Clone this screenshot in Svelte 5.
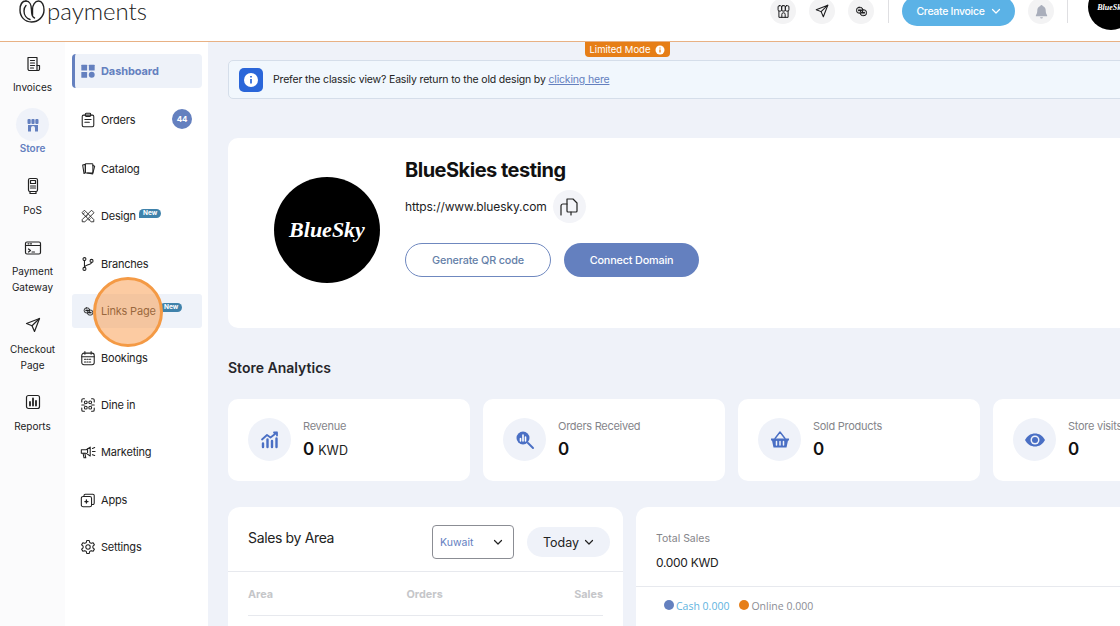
<script>
  const icons = {
    invoice: '<path d="M4 2.500h9v13H5.500A1.500 1.500 0 0 1 4 14z"/><path d="M13 10.500h2.500V14a1.500 1.500 0 0 1-1.500 1.500h-1M6.500 5.500h4M6.500 8h4M6.500 10.500h4M6.500 13h3"/>',
    store: '<g fill="currentColor" stroke="none"><rect x="3.500" y="3" width="3.200" height="5" rx="1"/><rect x="7.400" y="3" width="3.200" height="5" rx="1"/><rect x="11.300" y="3" width="3.200" height="5" rx="1"/><path d="M4 9h10v6.500h-3v-3.500a2 2 0 0 0-4 0v3.500H4z"/></g>',
    storeo: '<rect x="2.500" y="2" width="4.300" height="6.500" rx="1.500"/><rect x="6.800" y="2" width="4.400" height="6.500" rx="1.500"/><rect x="11.200" y="2" width="4.300" height="6.500" rx="1.500"/><path d="M3.500 8.500V16h11V8.500M7 16v-3.500a2 2 0 0 1 4 0V16"/>',
    pos: '<rect x="4.500" y="1.500" width="9" height="13" rx="1.500"/><rect x="6.500" y="3.500" width="5" height="3"/><path d="M6.500 9h5M6.500 11h5"/><path d="M6 14.500v2h6v-2"/>',
    gateway: '<rect x="1.500" y="3" width="15" height="12" rx="1.500"/><path d="M1.500 6.500h15M4.500 10l2 1.500-2 1.500M8 13h2.500M4 4.800h1M6.500 4.800h1"/>',
    send: '<path d="M15.500 2.500 2.500 7.500l5.500 2.200 2.500 5.800z"/><path d="M15.500 2.500 8 9.700"/>',
    reports: '<rect x="2.500" y="2.500" width="13" height="13" rx="2"/><path stroke-width="1.800" d="M6 12.500V9M9 12.500v-7M12 12.500V8"/>',
    dashboard: '<g fill="currentColor" stroke="none"><rect x="1.500" y="2" width="6.500" height="6.500" rx=".6"/><rect x="10" y="2" width="6.500" height="6.500" rx=".6"/><rect x="1.500" y="10" width="6.500" height="6.500" rx=".6"/><circle cx="13.200" cy="13.200" r="3.300"/></g>',
    orders: '<rect x="2.500" y="3.500" width="13" height="13" rx="1.500"/><rect x="6" y="1.500" width="6" height="3.500" rx="1"/><path d="M5.500 8.500h7M5.500 11.500h5"/>',
    catalog: '<path d="M3 4.500 6 3.800v9.500L4.500 14z"/><rect x="6" y="3" width="8.500" height="10.500" rx="1"/><path d="M14.500 5l2 .8-2.200 8.700-5.800-1"/>',
    design: '<path stroke-width="1" d="M2.500 5 5 2.500l10.500 10.500v2.500H13zM15.500 5 13 2.500 2.500 13v2.500H5zM3.500 7l1.500-1.500M6.500 10l1.500-1.500M10 13.500l1.500-1.500"/>',
    branches: '<circle cx="5" cy="3.500" r="1.700"/><circle cx="13" cy="5.500" r="1.700"/><circle cx="5" cy="14.500" r="1.700"/><path d="M5 5.200v7.600M13 7.200c0 3-8 2.500-8 5.600"/>',
    links: '<rect x="3" y="4" width="7.500" height="7" rx="3" fill="currentColor" fill-opacity=".15"/><rect x="7.500" y="7" width="7.500" height="7" rx="3" fill="currentColor" fill-opacity=".15"/><path d="M5.500 7.500h3M9.500 10.500h3" stroke-width="1.600"/>',
    bookings: '<rect x="2" y="3.500" width="14" height="13" rx="2.500"/><path d="M2 7.500h14M5.500 1.800v3M12.500 1.800v3"/><path stroke-dasharray="1.400 1.400" d="M5 10.500h8M5 13.500h8"/>',
    dine: '<path d="M2 5.500V3.500A1.500 1.500 0 0 1 3.500 2H5M13 2h1.500A1.500 1.500 0 0 1 16 3.500v2M16 12.500v2a1.500 1.500 0 0 1-1.500 1.500H13M5 16H3.500A1.500 1.500 0 0 1 2 14.500v-2"/><circle cx="6.500" cy="6" r="1.600"/><circle cx="11.500" cy="6" r="1.600"/><circle cx="6.500" cy="12" r="1.600"/><circle cx="11.500" cy="12" r="1.600"/><path d="M2 9h3M13 9h3"/>',
    marketing: '<path d="M1.500 6.500h5.500l4.500-3v10L7 10.500H1.500z"/><path d="m3.500 10.500 1 5h2l-1-5M14 5l2.500-1M14 8.500h3M14 12l2.500 1M8.500 5.500v4"/>',
    apps: '<rect x="1.500" y="5" width="11.500" height="11.500" rx="2"/><path d="M4.500 5V4a1.500 1.500 0 0 1 1.500-1.500h8.500A1.500 1.500 0 0 1 16 4v8.500a1.500 1.500 0 0 1-1.500 1.500H13"/><path d="M7.200 9v3.500M5.500 10.800h3.500" stroke-width="1.500"/>',
    settings: '<circle cx="9" cy="9" r="2.500"/><path d="m7.600 1.700 2.800 0 .5 2.200 1.700 1 2.200-.7 1.400 2.400-1.700 1.500v1.800l1.700 1.500-1.400 2.400-2.200-.7-1.700 1-.5 2.200H7.600l-.5-2.200-1.700-1-2.200.7-1.400-2.400 1.700-1.500V8.100L1.800 6.600l1.400-2.400 2.200.7 1.700-1z"/>',
    chart: '<path d="M2 9.500 7 5l3.500 2.500L17 2.500M14 2.500h3v3" stroke-width="1.800"/><path stroke-width="2.400" d="M3 17v-3.500M7.500 17V9.500M12 17v-6M16.500 17V8.500"/>',
    search: '<circle cx="8" cy="8" r="6.500" fill="currentColor" stroke="none"/><path stroke="#fff" stroke-width="1.600" d="M5.500 11V8.500M8 11V5M10.500 11V7"/><path stroke-width="2" d="m13 13 5 5"/>',
    basket: '<path fill="currentColor" stroke="none" d="M1 8.500h18v2h-1l-1.500 7h-13L2 10.500H1z"/><path stroke-width="1.400" d="m5 8.500 5-6.500 5 6.500"/><path stroke="#eff2f9" stroke-width="1.500" d="M6.500 11.500v3.500M10 11.500v3.500M13.500 11.500v3.500"/>',
    eye: '<path fill="currentColor" stroke="none" d="M0 10c2.500-4.500 6-6.500 10-6.500s7.500 2 10 6.500c-2.500 4.500-6 6.500-10 6.500S2.500 14.500 0 10z"/><circle cx="10" cy="10" r="4.500" fill="#eff2f9" stroke="none"/><circle cx="10" cy="10" r="3" fill="currentColor" stroke="none"/>'
  };

  const rail = [
    { id: 'invoice', label: ['Invoices'] },
    { id: 'store', label: ['Store'], active: true },
    { id: 'pos', label: ['PoS'] },
    { id: 'gateway', label: ['Payment', 'Gateway'] },
    { id: 'send', label: ['Checkout', 'Page'] },
    { id: 'reports', label: ['Reports'] }
  ];

  const nav = [
    { id: 'dashboard', label: 'Dashboard', active: true },
    { id: 'orders', label: 'Orders', count: 44 },
    { id: 'catalog', label: 'Catalog' },
    { id: 'design', label: 'Design', isNew: true },
    { id: 'branches', label: 'Branches' },
    { id: 'links', label: 'Links Page', isNew: true, hover: true },
    { id: 'bookings', label: 'Bookings' },
    { id: 'dine', label: 'Dine in' },
    { id: 'marketing', label: 'Marketing' },
    { id: 'apps', label: 'Apps' },
    { id: 'settings', label: 'Settings' }
  ];

  const stats = [
    { id: 'chart', label: 'Revenue', value: '0', unit: 'KWD' },
    { id: 'search', label: 'Orders Received', value: '0' },
    { id: 'basket', label: 'Sold Products', value: '0' },
    { id: 'eye', label: 'Store visits', value: '0' }
  ];
</script>

{#snippet icon(id, size = 18, box = 18)}
  <svg class="ic" width={size} height={size} viewBox="0 0 {box} {box}" fill="none" stroke="currentColor" stroke-width="1.200" stroke-linecap="round" stroke-linejoin="round">{@html icons[id]}</svg>
{/snippet}

{#snippet chevron(size = 10)}
  <svg width={size} height={size} viewBox="0 0 10 10" fill="none" stroke="currentColor" stroke-width="1.200" stroke-linecap="round" stroke-linejoin="round"><path d="m1.500 3.500 3.500 3.500 3.500-3.500"/></svg>
{/snippet}

<div class="page">
  <header class="top">
    <div class="logo">
      <svg width="26" height="23" viewBox="0 0 26 23" fill="none" stroke="#222" stroke-width="1.400" stroke-linecap="round"><path d="M7 1C3 1 1 5 1 10c0 7 5 12 11.500 12S25 17 25 10C25 5 23 1 19.500 1 16 1 13.500 5 13.500 9.500V15"/><path d="M7 1c3.500 0 5.500 4 5.500 9 0 4 .6 7 3 8M7 5.500C5.500 7 5 9 5 11c0 4 2.500 7.500 6 8.500"/></svg>
      <span class="brand">payments</span>
    </div>
    <div class="tools">
      <span class="tool">{@render icon('storeo', 15)}</span>
      <span class="tool">{@render icon('send', 16)}</span>
      <span class="tool">{@render icon('links', 15)}</span>
      <span class="sep first"></span>
      <span class="create">Create Invoice {@render chevron(10)}</span>
      <span class="tool bell">
        <svg width="15" height="15" viewBox="0 0 16 16" fill="#a9aebb"><path d="M8 1a1.200 1.200 0 0 0-1.200 1.200C4.500 2.800 3.500 4.800 3.500 7c0 2.500-.6 3.800-1.500 5v1h12v-1c-.9-1.200-1.500-2.500-1.500-5 0-2.200-1-4.200-3.300-4.800A1.200 1.200 0 0 0 8 1zM6.500 14a1.500 1.500 0 0 0 3 0z"/></svg>
      </span>
      <span class="sep"></span>
      <span class="avatar-sm">BlueSky</span>
    </div>
  </header>

  <div class="body">
    <aside class="rail">
      {#each rail as r}
        <div class="rail-item" class:active={r.active}>
          <span class="rail-ic">{@render icon(r.id, 18)}</span>
          <span class="rail-label">{#each r.label as l}<span>{l}</span>{/each}</span>
        </div>
      {/each}
    </aside>

    <nav class="nav">
      {#each nav as n}
        <div class="nav-item" class:active={n.active} class:hover={n.hover}>
          <span class="nav-ic">{@render icon(n.id, n.id === 'links' ? 13 : 16)}</span>
          <span class="nav-label">{n.label}</span>
          {#if n.isNew}<span class="new">New</span>{/if}
          {#if n.count}<span class="count">{n.count}</span>{/if}
        </div>
      {/each}
      <span class="spot"></span>
    </nav>

    <main class="main">
      <span class="limited">Limited Mode
        <svg width="10" height="10" viewBox="0 0 10 10"><circle cx="5" cy="5" r="4.500" fill="#fff"/><path d="M5 4.500v3M5 2.500v1" stroke="#e67e17" stroke-width="1.300"/></svg>
      </span>
      <div class="inner">
        <div class="alert">
          <span class="alert-ic">
            <svg width="16" height="16" viewBox="0 0 16 16"><circle cx="8" cy="8" r="7" fill="#fff"/><path d="M8 7v4.500M8 4v1.500" stroke="#2a66d9" stroke-width="1.700"/></svg>
          </span>
          <span>Prefer the classic view? Easily return to the old design by <a href="#top">clicking here</a></span>
        </div>

        <section class="store">
          <div class="avatar"><span>BlueSky</span></div>
          <div class="store-info">
            <h1>BlueSkies testing</h1>
            <div class="url">
              <span>https://www.bluesky.com</span>
              <span class="copy">
                <svg width="20" height="20" viewBox="0 0 20 20" fill="none" stroke="#222" stroke-width="1.200" stroke-linecap="round" stroke-linejoin="round"><path d="M8 2h6l4 4v8a1 1 0 0 1-1 1H9a1 1 0 0 1-1-1z"/><path d="M2 18V9a2 2 0 0 1 2-2h4M12 15v3"/></svg>
              </span>
            </div>
            <div class="actions">
              <span class="btn ghost">Generate QR code</span>
              <span class="btn solid">Connect Domain</span>
            </div>
          </div>
        </section>

        <h2>Store Analytics</h2>

        <div class="stats">
          {#each stats as s}
            <div class="stat">
              <span class="stat-ic">{@render icon(s.id, 20, 20)}</span>
              <div>
                <div class="stat-label">{s.label}</div>
                <div class="stat-value">{s.value}{#if s.unit}<small>{s.unit}</small>{/if}</div>
              </div>
            </div>
          {/each}
        </div>

        <div class="lower">
          <section class="area">
            <div class="area-head">
              <h3>Sales by Area</h3>
              <span class="select">Kuwait {@render chevron(10)}</span>
              <span class="pill">Today {@render chevron(10)}</span>
            </div>
            <div class="cols"><span>Area</span><span>Orders</span><span>Sales</span></div>
          </section>
          <section class="total">
            <div class="total-head">
              <div class="total-label">Total Sales</div>
              <div class="total-value">0.000 KWD</div>
            </div>
            <div class="legend">
              <i class="dot blue"></i><span class="cash">Cash 0.000</span>
              <i class="dot orange"></i><span>Online 0.000</span>
            </div>
          </section>
        </div>
      </div>
    </main>
  </div>
</div>

<style>
  :global(body) { margin: 0; overflow: hidden; }
  .page { width: 1120px; height: 626px; overflow: hidden; display: flex; flex-direction: column; font-family: Inter, "Liberation Sans", sans-serif; color: #1c1c1e; background: #fff; }
  .ic { display: block; flex: none; }

  .top { height: 42px; flex: none; box-sizing: border-box; border-bottom: 1px solid #e8b184; display: flex; justify-content: space-between; align-items: flex-start; }
  .logo { display: flex; align-items: flex-start; margin: 0 0 0 19px; gap: 2px; height: 24px; }
  .brand { font-family: Lato, sans-serif; font-weight: 300; font-size: 24px; line-height: 24px; color: #222; margin-top: -1px; }
  .tools { display: flex; align-items: center; height: 22px; margin-right: -14px; }
  .tool { width: 26px; height: 26px; border-radius: 50%; background: #f3f3f4; display: grid; place-items: center; margin-right: 13px; flex: none; }
  .sep { width: 1px; height: 24px; background: #dfdfe2; flex: none; margin: 0 20px 0 0; }
  .sep.first { margin: 0 13px 0 1px; }
  .create { width: 113px; height: 30px; margin-right: 13px; box-sizing: border-box; border-radius: 15px; background: #5bb2e6; color: #fff; font-size: 10.500px; letter-spacing: -.3px; font-weight: 500; display: flex; align-items: center; justify-content: center; gap: 6px; flex: none; }
  .bell { margin-right: 13px; }
  .avatar-sm { width: 46px; height: 46px; border-radius: 50%; background: #000; color: #fff; flex: none; margin-top: -8px; display: grid; place-items: center; font: italic 700 8px "Liberation Serif", serif; }

  .body { flex: 1; display: flex; min-height: 0; }

  .rail { width: 65px; flex: none; background: #fbfbfc; font-size: 10px; text-align: center; box-sizing: border-box; padding-top: 5px; }
  .rail-item { display: flex; flex-direction: column; align-items: center; margin-bottom: 13.400px; }
  .rail-ic { width: 33px; height: 33px; display: grid; place-items: center; color: #222; }
  .rail-label { display: flex; flex-direction: column; line-height: 16px; margin-top: -1px; }
  .rail-item.active .rail-ic { background: #eff2f9; border-radius: 50%; color: #6480bf; }
  .rail-item.active .rail-label { color: #6480bf; font-weight: 600; }

  .nav { width: 143px; flex: none; position: relative; box-sizing: border-box; padding: 12px 6px 0 7px; display: flex; flex-direction: column; gap: 13.300px; background: #fff; }
  .nav-item { height: 34px; flex: none; display: flex; align-items: center; padding-left: 8px; gap: 5px; border-radius: 3px; font-size: 11px; letter-spacing: -.2px; color: #222; position: relative; }
  .nav-ic { width: 16px; display: grid; place-items: center; flex: none; }
  .nav-item:nth-child(2) { margin-top: 2px; }
  .nav-item:nth-child(3) { margin-top: 1px; }
  .nav-item:nth-child(5) { margin-top: 1px; }
  .nav-item:nth-child(7) { margin-top: -1px; }
  .nav-item.active { background: #eef2f9; border-left: 3px solid #6480bf; padding-left: 5px; border-radius: 4px; color: #6480bf; font-weight: 700; letter-spacing: -.1px; }
  .nav-item.hover { background: #eef2f9; }
  .new { position: absolute; font-size: 6.500px; letter-spacing: 0; font-weight: 700; color: #fff; background: #3f82ab; border-radius: 6px 6px 6px 0; padding: 1px 4px; line-height: 7px; top: 10px; left: 67px; }
  .nav-item.hover .new { left: 88px; top: 9px; }
  .count { position: absolute; right: 10px; top: 6px; width: 20px; height: 20px; border-radius: 50%; background: #6480bf; color: #fff; font-size: 8px; font-weight: 700; display: grid; place-items: center; }
  .spot { position: absolute; left: 28px; top: 235px; width: 70px; height: 70px; box-sizing: border-box; border-radius: 50%; border: 3px solid #f49a45; background: rgba(249, 160, 85, .55); }

  .main { flex: 1; min-width: 0; position: relative; background: #eff2f9; overflow: hidden; padding: 18px 0 0 20px; }
  .limited { position: absolute; left: 377px; top: 0; width: 85px; height: 15px; box-sizing: border-box; border-radius: 0 0 4px 4px; background: #e67e17; color: #fff; font-size: 9.500px; display: flex; align-items: center; justify-content: center; gap: 5px; }
  .inner { width: 1020px; }

  .alert { height: 39px; box-sizing: border-box; background: #f1f7fd; border: 1px solid #d5deea; border-radius: 5px; display: flex; align-items: center; gap: 10px; padding-left: 10px; font-size: 10.500px; letter-spacing: -.17px; color: #222; margin-bottom: 39px; }
  .alert-ic { width: 24px; height: 24px; border-radius: 5px; background: #2a66d9; display: grid; place-items: center; }
  .alert a { color: #6480bf; }

  .store { height: 190px; box-sizing: border-box; background: #fff; border-radius: 10px; padding: 20px 46px 0; display: flex; gap: 25px; margin-bottom: 28px; }
  .avatar { width: 106px; height: 106px; border-radius: 50%; background: #000; color: #fff; display: grid; place-items: center; margin-top: 19px; flex: none; font: italic 700 22px "Liberation Serif", serif; }
  h1 { font-size: 20px; line-height: 24px; font-weight: 700; margin: 0 0 8px; color: #111; letter-spacing: -.5px; }
  .url { display: flex; align-items: center; gap: 6px; font-size: 12px; letter-spacing: -.1px; height: 33px; margin-bottom: 20px; }
  .copy { width: 33px; height: 33px; border-radius: 50%; background: #f3f4f8; display: grid; place-items: center; }
  .actions { display: flex; gap: 13px; }
  .btn { height: 34px; box-sizing: border-box; border-radius: 17px; display: grid; place-items: center; font-size: 10.800px; letter-spacing: -.15px; font-weight: 500; }
  .ghost { width: 146px; border: 1px solid #6f88bf; color: #6480a8; }
  .solid { width: 135px; background: #6480bf; color: #fff; }

  h2 { font-size: 14px; line-height: 24px; font-weight: 600; margin: 0 0 19px; color: #26262a; }

  .stats { display: flex; gap: 13px; margin-bottom: 26px; }
  .stat { width: 242px; height: 82px; flex: none; box-sizing: border-box; background: #fff; border-radius: 10px; padding: 19px 20px; display: flex; gap: 12px; }
  .stat-ic { width: 43px; height: 43px; border-radius: 50%; background: #eff2f9; color: #4a6fc4; display: grid; place-items: center; flex: none; }
  .stat-label { font-size: 11px; letter-spacing: -.27px; line-height: 16px; color: #85858a; }
  .stat-value { font-size: 17px; line-height: 28px; font-weight: 600; color: #111; margin-top: 1px; }
  .stat-value small { font-size: 12.500px; font-weight: 400; margin-left: 4px; color: #222; }

  .lower { display: flex; gap: 13px; align-items: flex-start; }
  .area { width: 395px; flex: none; background: #fff; border-radius: 12px 12px 0 0; height: 130px; }
  .area-head { height: 65px; box-sizing: border-box; border-bottom: 1px solid #e7e9ee; display: flex; align-items: flex-start; padding: 18px 13px 0 20px; }
  h3 { font-size: 14px; font-weight: 400; line-height: 26px; letter-spacing: -.35px; margin: 0 auto -1px 0; color: #222; }
  .select { width: 82px; height: 34px; box-sizing: border-box; border: 1px solid #8b8d94; border-radius: 4px; display: flex; align-items: center; justify-content: space-between; padding: 0 10px 0 7px; font-size: 10.500px; color: #6480bf; margin-right: 13px; }
  .select svg { color: #222; }
  .pill { width: 83px; height: 30px; margin-top: 2px; border-radius: 15px; background: #eff2f9; display: flex; align-items: center; justify-content: center; gap: 5px; font-size: 12.500px; color: #222; }
  .cols { display: flex; justify-content: space-between; margin: 0 20px; height: 44px; line-height: 45px; box-sizing: border-box; border-bottom: 1px solid #e7e9ee; font-size: 10.800px; font-weight: 700; color: #c5c6c9; }
  .cols span:nth-child(2) { margin-left: 2px; }

  .total { flex: 1; background: #fff; border-radius: 12px 12px 0 0; height: 130px; }
  .total-head { height: 80px; box-sizing: border-box; border-bottom: 1px solid #e7e9ee; padding: 24px 20px 0; }
  .total-label { font-size: 10.500px; line-height: 16px; color: #85858a; }
  .total-value { font-size: 12px; line-height: 16px; margin-top: 8px; color: #222; letter-spacing: -.3px; }
  .legend { display: flex; align-items: center; padding: 12px 0 0 28px; font-family: "Open Sans", sans-serif; font-size: 10.500px; color: #8b8d94; }
  .dot { width: 10px; height: 10px; border-radius: 50%; margin: -3px 2px 0 0; flex: none; }
  .blue { background: #6480bf; }
  .orange { background: #e67e17; margin-left: 10px; }
  .cash { color: #5fb4e0; }
</style>
